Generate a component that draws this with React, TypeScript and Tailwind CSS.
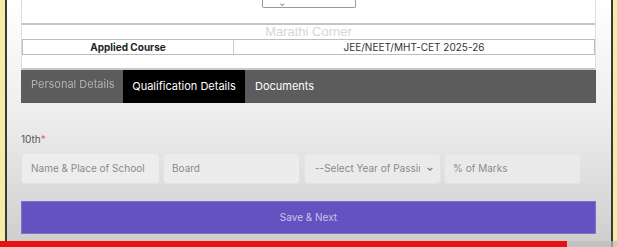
export default function App() {
  return (
    <div className="relative w-[617px] h-[247px] overflow-hidden flex bg-white" style={{ fontFamily: "Inter, 'Open Sans', sans-serif" }}>
      {/* left edge */}
      <div className="w-[5px] bg-[#f2eea8]" />
      <div className="w-[2px] bg-[#3a3a30]" />

      <main className="flex-1 flex flex-col pl-[14px] pr-[15px] bg-gradient-to-b from-white via-[#ececec] to-[#cdcdcd]">
        {/* info table */}
        <div className="bg-white border-x border-[#dedede] flex flex-col">
          <div className="h-[23px] flex justify-center">
            <div className="w-[94px] h-[8px] border-x border-b border-[#9a9a9a] rounded-b-[2px] relative">
              <span className="absolute left-[17px] top-[0px] text-[7px] leading-none text-[#444]">⌄</span>
            </div>
          </div>
          <div className="h-[2px] bg-[#c4c4c4]" />
          <div className="h-[14px] flex items-center justify-center text-[13px] text-[#d6d6d6]" style={{ fontFamily: "'Liberation Sans', Arial, sans-serif" }}>
            Marathi Corner
          </div>
          <div className="h-[16px] flex border border-[#bdbdbd] text-[10px] text-[#222]">
            <div className="w-[211px] border-r border-[#cfcfcf] flex items-center justify-center font-bold">Applied Course</div>
            <div className="flex-1 flex items-center justify-center text-[#333]">JEE/NEET/MHT-CET 2025-26</div>
          </div>
          <div className="h-[13px]" />
          <div className="h-[2px] bg-[#c8c8c8]" />
        </div>

        {/* tabs */}
        <div className="h-[33px] bg-[#5c5c5c] flex text-[11px] text-white">
          <div className="w-[102px] flex items-center pl-[10px] text-[#b0b0b0] blur-[0.4px]">
            <span className="-mt-[5px]">Personal Details</span>
          </div>
          <div className="w-[122px] bg-black flex items-center justify-center">Qualification Details</div>
          <div className="flex items-center pl-[10px]">Documents</div>
        </div>

        {/* 10th */}
        <div className="mt-[31px] text-[10px] text-[#555] leading-none">
          10th<span className="text-[#e0607a]">*</span>
        </div>
        <div className="mt-[9px] flex gap-[3px] text-[10px] text-[#8a8a8a]">
          <div className="w-[139px] h-[31px] border border-[#e2e2e2] rounded-[4px] flex items-center pl-[9px] bg-[#ededed]">Name &amp; Place of School</div>
          <div className="w-[137px] h-[31px] border border-[#e2e2e2] rounded-[4px] flex items-center pl-[8px] bg-[#ececec]">Board</div>
          <div className="w-[137px] h-[31px] border border-[#e2e2e2] rounded-[4px] flex items-center pl-[10px] pr-[6px] bg-[#ebebeb] ml-[1px]">
            <span className="flex-1 whitespace-nowrap overflow-hidden">--Select Year of Passing</span>
            <svg width="8" height="8" viewBox="0 0 10 10" className="ml-[6px]"><path d="M2 3.5 5 6.5 8 3.5" fill="none" stroke="#777" strokeWidth="1.4" /></svg>
          </div>
          <div className="w-[137px] h-[31px] border border-[#e2e2e2] rounded-[4px] flex items-center pl-[8px] bg-[#eaeaea]">% of Marks</div>
        </div>

        {/* save */}
        <div className="mt-[17px] h-[33px] bg-[#6552c1] border border-[#8070cc] flex items-center justify-center text-[10px] text-[#c8c2e8]">
          Save &amp; Next
        </div>
      </main>

      {/* right edge */}
      <div className="w-[2px] bg-[#3a3a30]" />
      <div className="w-[4px] bg-[#f2eea8]" />

      {/* video progress bar */}
      <div className="absolute left-0 bottom-0 w-[567px] h-[6px] bg-[#e81010]" />
      <div className="absolute left-[567px] bottom-0 right-0 h-[6px] bg-[#bdbdbd]/70" />
    </div>
  );
}
